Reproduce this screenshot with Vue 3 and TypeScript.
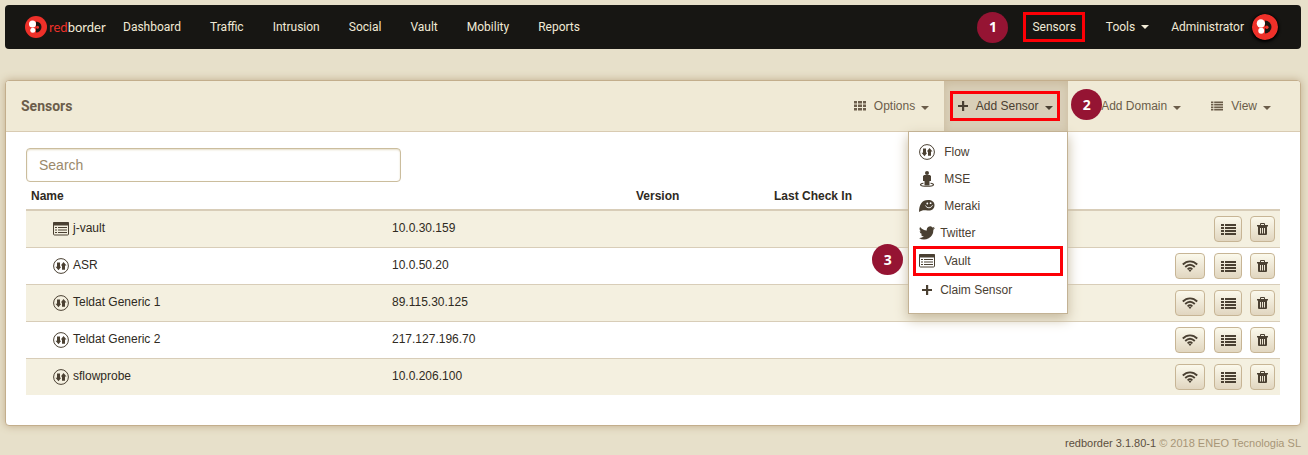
<script setup lang="ts">
import { ref } from 'vue'

interface Sensor {
  name: string
  address: string
  kind: 'vault' | 'flow'
}

const search = ref('')
const navItems: string[] = ['Dashboard', 'Traffic', 'Intrusion', 'Social', 'Vault', 'Mobility', 'Reports']
const sensors: Sensor[] = [
  { name: 'j-vault', address: '10.0.30.159', kind: 'vault' },
  { name: 'ASR', address: '10.0.50.20', kind: 'flow' },
  { name: 'Teldat Generic 1', address: '89.115.30.125', kind: 'flow' },
  { name: 'Teldat Generic 2', address: '217.127.196.70', kind: 'flow' },
  { name: 'sflowprobe', address: '10.0.206.100', kind: 'flow' },
]
const addTypes: { label: string; icon: string; short?: boolean; marked?: boolean }[] = [
  { label: 'Flow', icon: 'flow' },
  { label: 'MSE', icon: 'mse' },
  { label: 'Meraki', icon: 'meraki' },
  { label: 'Twitter', icon: 'twitter', short: true },
  { label: 'Vault', icon: 'vault', marked: true },
]
</script>

<template>
  <svg class="defs" aria-hidden="true">
    <symbol id="i-brand" viewBox="0 0 22 22">
      <circle cx="11" cy="11" r="11" fill="#ee3029" />
      <path d="M11 5.500a5.500 5.500 0 1 1 0 11z" fill="#171613" />
      <circle cx="7.500" cy="8" r="3.500" fill="#fff" />
      <circle cx="7.800" cy="14.200" r="2.500" fill="#fff" />
      <circle cx="12.500" cy="11.200" r="1.500" fill="#ee3029" />
    </symbol>
    <symbol id="i-flow" viewBox="0 0 16 16">
      <circle cx="8" cy="8" r="7.400" fill="none" stroke="currentColor" stroke-width="1" />
      <path d="M4 4.500h3v4.200h1.200L5.500 12.300 2.500 8.700H4zM9 11.800h3V7.500h1.500L10.500 4 7.800 7.500H9z" fill="currentColor" />
    </symbol>
    <symbol id="i-vault" viewBox="0 0 16 14">
      <rect x=".5" y=".5" width="15" height="12.500" rx="1" fill="none" stroke="currentColor" stroke-width="1" />
      <path d="M0 1a1 1 0 0 1 1-1h14a1 1 0 0 1 1 1v2.600H0z" fill="currentColor" />
      <path d="M2 5h2v1H2zm3 0h9v1H5zM2 7.500h2v1H2zm3 0h9v1H5zM2 10h2v1H2zm3 0h9v1H5z" fill="currentColor" />
    </symbol>
    <symbol id="i-mse" viewBox="0 0 16 16">
      <circle cx="8" cy="2" r="2" fill="currentColor" />
      <path d="M5.200 4h5.600l1.200 1v5h-1.500v4.500h-5V10H4V5z" fill="currentColor" />
      <path d="M4.500 12.200C0 12.800 0 15.300 8 15.300s8-2.500 3.500-3.100" fill="none" stroke="currentColor" stroke-width="1.100" />
    </symbol>
    <symbol id="i-meraki" viewBox="0 0 16 13">
      <path d="M0 12.500C0 5 3 .5 9 .5c4 0 6.500 2 6.500 5 0 4-3 6-7 5.500C5 10.500 3 10.500 0 12.500z" fill="currentColor" />
      <path d="M6.500 6c1.500 3.200 5.500 3 7-.2" fill="none" stroke="#fff" stroke-width=".9" />
      <circle cx="8.300" cy="4" r=".9" fill="#fff" /><circle cx="11.600" cy="3.700" r=".9" fill="#fff" />
    </symbol>
    <symbol id="i-twitter" viewBox="0 0 24 20">
      <path d="M24 2.400a10 10 0 0 1-2.800.8A5 5 0 0 0 23.300.5a10 10 0 0 1-3.100 1.200 4.900 4.900 0 0 0-8.400 4.500A14 14 0 0 1 1.700 1a4.900 4.900 0 0 0 1.500 6.600 5 5 0 0 1-2.200-.6 4.900 4.900 0 0 0 3.900 4.900 5 5 0 0 1-2.200.1 4.900 4.900 0 0 0 4.600 3.400A10 10 0 0 1 0 17.500 14 14 0 0 0 21.500 5 10 10 0 0 0 24 2.400z" fill="currentColor" />
    </symbol>
    <symbol id="i-plus" viewBox="0 0 10 10">
      <path d="M4 0h2.200v3.900H10v2.200H6.200V10H4V6.100H0V3.900h4z" fill="currentColor" />
    </symbol>
    <symbol id="i-grid" viewBox="0 0 12 10">
      <path d="M0 0h3v2.500H0zM4 0h4v2.500H4zM9 0h3v2.500H9zM0 3.500h3V6H0zM4 3.500h4V6H4zM9 3.500h3V6H9zM0 7h3v2.500H0zM4 7h4v2.500H4zM9 7h3v2.500H9z" fill="currentColor" />
    </symbol>
    <symbol id="i-list" viewBox="0 0 15 11">
      <path d="M0 0h3v2H0zM4 0h11v2H4zM0 3h3v2H0zM4 3h11v2H4zM0 6h3v2H0zM4 6h11v2H4zM0 9h3v2H0zM4 9h11v2H4z" fill="currentColor" />
    </symbol>
    <symbol id="i-trash" viewBox="0 0 11 12">
      <path d="M3 2V1a1 1 0 0 1 1-1h3a1 1 0 0 1 1 1v1h3v1.500H0V2zm1 0h3V1H4zM1 3.500h9V11a1 1 0 0 1-1 1H2a1 1 0 0 1-1-1zM3 5v5.500h1V5zm2 0v5.500h1V5zm2 0v5.500h1V5z" fill="currentColor" fill-rule="evenodd" />
    </symbol>
    <symbol id="i-wifi" viewBox="0 0 16 12">
      <path d="M.8 4.500c4.200-4.200 10.200-4.200 14.400 0M3.200 7c3-2.900 6.600-2.900 9.600 0M5.600 9.300c1.700-1.500 3.100-1.500 4.800 0" fill="none" stroke="currentColor" stroke-width="1.800" />
      <path d="M6.500 10.300q1.500-1 3 0L8 12z" fill="currentColor" />
    </symbol>
  </svg>

  <div class="page">
    <nav class="navbar">
      <a class="brand" href="#">
        <svg class="brand-mark"><use href="#i-brand" /></svg>
        <span class="brand-name"><span class="brand-red">red</span>border</span>
      </a>
      <a v-for="item in navItems" :key="item" class="nav-link" href="#">{{ item }}</a>
      <div class="nav-right">
        <span class="step">1</span>
        <a class="nav-sensors marked" href="#">Sensors</a>
        <button type="button" class="nav-tools">Tools<i class="caret" /></button>
        <a class="nav-user" href="#">Administrator<svg class="avatar"><use href="#i-brand" /></svg></a>
      </div>
    </nav>

    <main class="panel">
      <header class="panel-head">
        <h1>Sensors</h1>
        <div class="actions">
          <button type="button" class="action"><svg class="ic-head"><use href="#i-grid" /></svg>Options<i class="caret" /></button>
          <div class="open-action">
            <button type="button" class="add-sensor marked" aria-expanded="true"><svg class="ic-plus"><use href="#i-plus" /></svg>Add Sensor<i class="caret" /></button>
            <div class="menu">
              <a v-for="type in addTypes" :key="type.label" href="#" class="menu-item" :class="{ short: type.short, marked: type.marked }">
                <svg class="menu-icon"><use :href="'#i-' + type.icon" /></svg>{{ type.label }}
              </a>
              <a href="#" class="menu-item claim"><svg class="ic-plus"><use href="#i-plus" /></svg>Claim Sensor</a>
              <span class="step step-menu">3</span>
            </div>
          </div>
          <button type="button" class="action domain"><span class="step step-domain">2</span>Add Domain<i class="caret" /></button>
          <button type="button" class="action view"><svg class="ic-head"><use href="#i-list" /></svg>View<i class="caret" /></button>
        </div>
      </header>

      <div class="content">
        <input v-model="search" class="search" type="text" placeholder="Search" aria-label="Search" />
        <table>
          <colgroup>
            <col class="c-name" /><col class="c-ip" /><col class="c-version" /><col class="c-check" /><col />
          </colgroup>
          <thead>
            <tr><th>Name</th><th></th><th>Version</th><th>Last Check In</th><th></th></tr>
          </thead>
          <tbody>
            <tr v-for="sensor in sensors" :key="sensor.name">
              <td class="name"><svg class="row-icon"><use :href="'#i-' + sensor.kind" /></svg>{{ sensor.name }}</td>
              <td>{{ sensor.address }}</td>
              <td></td>
              <td></td>
              <td class="tools">
                <div class="row-actions">
                  <button v-if="sensor.kind === 'flow'" type="button" class="btn btn-wifi" aria-label="Wireless"><svg class="ic-wifi"><use href="#i-wifi" /></svg></button>
                  <button type="button" class="btn btn-list" aria-label="Details"><svg class="ic-list"><use href="#i-list" /></svg></button>
                  <button type="button" class="btn btn-trash" aria-label="Delete"><svg class="ic-trash"><use href="#i-trash" /></svg></button>
                </div>
              </td>
            </tr>
          </tbody>
        </table>
      </div>
    </main>

    <footer>redborder 3.1.80-1 <span>© 2018 ENEO Tecnologia SL</span></footer>
  </div>
</template>

<style>
body {
  background: #e7e0ca;
}
</style>

<style scoped>
* {
  box-sizing: border-box;
}
.defs {
  position: absolute;
  width: 0;
  height: 0;
}
.page {
  padding: 5px 7px 0 5px;
  font: 12px/18px "Liberation Sans", Arial, sans-serif;
  color: #2f2a22;
}
a {
  color: inherit;
  text-decoration: none;
}
button {
  font: inherit;
  color: inherit;
  background: none;
  border: 0;
  padding: 0;
}
svg {
  flex: none;
}
.navbar {
  display: flex;
  align-items: center;
  height: 44px;
  padding: 0 23px 0 20px;
  border-radius: 4px;
  background: #171613;
  color: #f1ead6;
  font-family: Roboto, sans-serif;
}
.brand {
  display: flex;
  align-items: center;
  width: 83px;
  gap: 2px;
}
.brand-mark {
  width: 22px;
  height: 22px;
}
.brand-name {
  font: 13px/18px Lato, sans-serif;
}
.brand-red {
  color: #ee3029;
}
.nav-link {
  padding: 0 14px 0 15px;
}
.nav-right {
  display: flex;
  align-items: center;
  margin-left: auto;
}
.step {
  display: flex;
  align-items: center;
  justify-content: center;
  width: 31px;
  height: 31px;
  border-radius: 50%;
  background: #951433;
  color: #fff;
  font: bold 14px/18px "Open Sans", sans-serif;
}
.marked {
  border: 3px solid #fd0006;
}
.nav-sensors {
  margin-left: 15px;
  padding: 3px 6px;
}
.nav-tools {
  margin: 0 22px 0 21px;
}
.caret {
  display: inline-block;
  margin-left: 6px;
  vertical-align: 2px;
  border: 4px solid transparent;
  border-top-color: currentColor;
  border-bottom: 0;
}
.nav-user {
  display: flex;
  align-items: center;
  gap: 8px;
}
.avatar {
  width: 26px;
  height: 26px;
  border-radius: 50%;
  box-shadow: 0 1px 3px 1px #000;
}
.panel {
  margin-top: 31px;
  min-height: 346px;
  border: 1px solid #c3ae8c;
  border-radius: 4px;
  background: #fff;
  box-shadow: 0 0 8px #c0ac8b;
}
.panel-head {
  display: flex;
  align-items: stretch;
  justify-content: space-between;
  height: 51px;
  padding-left: 15px;
  background: #f0ead6;
  border-bottom: 1px solid #d9cbb2;
  border-radius: 3px 3px 0 0;
  color: #6b5d4a;
}
h1 {
  margin: 0;
  align-self: center;
  font: bold 14px/20px Roboto, sans-serif;
}
.actions {
  display: flex;
}
.action {
  display: flex;
  align-items: center;
  padding: 0 15px;
}
.action .caret,
.add-sensor .caret {
  margin-top: 3px;
}
.ic-head {
  width: 12px;
  height: 10px;
  margin-right: 8px;
}
.ic-plus {
  width: 10px;
  height: 10px;
  margin-right: 8px;
}
.open-action {
  position: relative;
  display: flex;
  align-items: center;
  width: 124px;
  padding: 0 6px;
  background: #d9cfb8;
  box-shadow: inset 0 3px 8px #cabb9e;
  color: #4a4032;
}
.add-sensor {
  display: flex;
  align-items: center;
  justify-content: center;
  width: 110px;
  height: 30px;
}
.domain {
  position: relative;
  padding-left: 33px;
}
.step-domain {
  position: absolute;
  left: 3px;
  top: 8px;
}
.view {
  padding-right: 29px;
}
.menu {
  position: absolute;
  z-index: 2;
  top: 50px;
  right: 0;
  width: 160px;
  height: 183px;
  padding: 6px 4px 0;
  border: 1px solid #c3b294;
  background: #fff;
  box-shadow: 0 5px 12px #c6b99e;
}
.menu-item {
  display: flex;
  align-items: center;
  height: 27px;
  padding-left: 6px;
  gap: 9px;
}
.menu-icon {
  width: 16px;
  height: 16px;
}
.short {
  gap: 5px;
}
.menu-item.marked {
  height: 30px;
  padding-left: 3px;
}
.claim {
  padding-left: 9px;
  gap: 0;
}
.step-menu {
  position: absolute;
  left: -37px;
  top: 112px;
}
.content {
  padding: 16px 20px 30px;
}
.search {
  display: block;
  width: 375px;
  height: 34px;
  padding: 0 12px;
  border: 1px solid #cbbd9d;
  border-radius: 4px;
  background: #fff;
  box-shadow: inset 0 1px 2px #e4dcc6;
  font: 14px/20px "Liberation Sans", Arial, sans-serif;
  color: #4a4032;
}
.search::placeholder {
  color: #9b896b;
  opacity: 1;
}
table {
  width: 100%;
  table-layout: fixed;
  border-collapse: separate;
  border-spacing: 0;
}
.c-name {
  width: 361px;
}
.c-ip {
  width: 244px;
}
.c-version {
  width: 138px;
}
.c-check {
  width: 200px;
}
th {
  height: 29px;
  padding: 0 5px;
  border-bottom: 2px solid #d8cdb8;
  text-align: left;
}
td {
  height: 37px;
  padding: 0 5px 2px;
  border-top: 1px solid #d8cdb8;
}
td.tools {
  padding-bottom: 0;
}
tbody tr:first-child td {
  height: 36px;
  border-top: 0;
}
tbody tr:nth-child(odd) {
  background: #f4f0e0;
}
td.name {
  padding-left: 27px;
}
.row-icon {
  width: 16px;
  height: 16px;
  margin-right: 4px;
  vertical-align: -5px;
  color: #4a4032;
}
.row-actions {
  display: flex;
  justify-content: flex-end;
}
.btn {
  display: flex;
  align-items: center;
  justify-content: center;
  height: 26px;
  border: 1px solid #c7b595;
  border-radius: 4px;
  background: linear-gradient(#fbf9ec, #e1d6c0);
  color: #4a4032;
}
.btn-wifi {
  width: 30px;
  margin-right: 9px;
}
.btn-list {
  width: 28px;
  margin-right: 8px;
}
.btn-trash {
  width: 25px;
}
.ic-wifi {
  width: 16px;
  height: 12px;
}
.ic-list {
  width: 15px;
  height: 11px;
}
.ic-trash {
  width: 11px;
  height: 12px;
}
footer {
  padding-top: 8px;
  text-align: right;
  font-size: 11px;
  color: #5c4f3e;
}
footer span {
  color: #a79677;
}
</style>
